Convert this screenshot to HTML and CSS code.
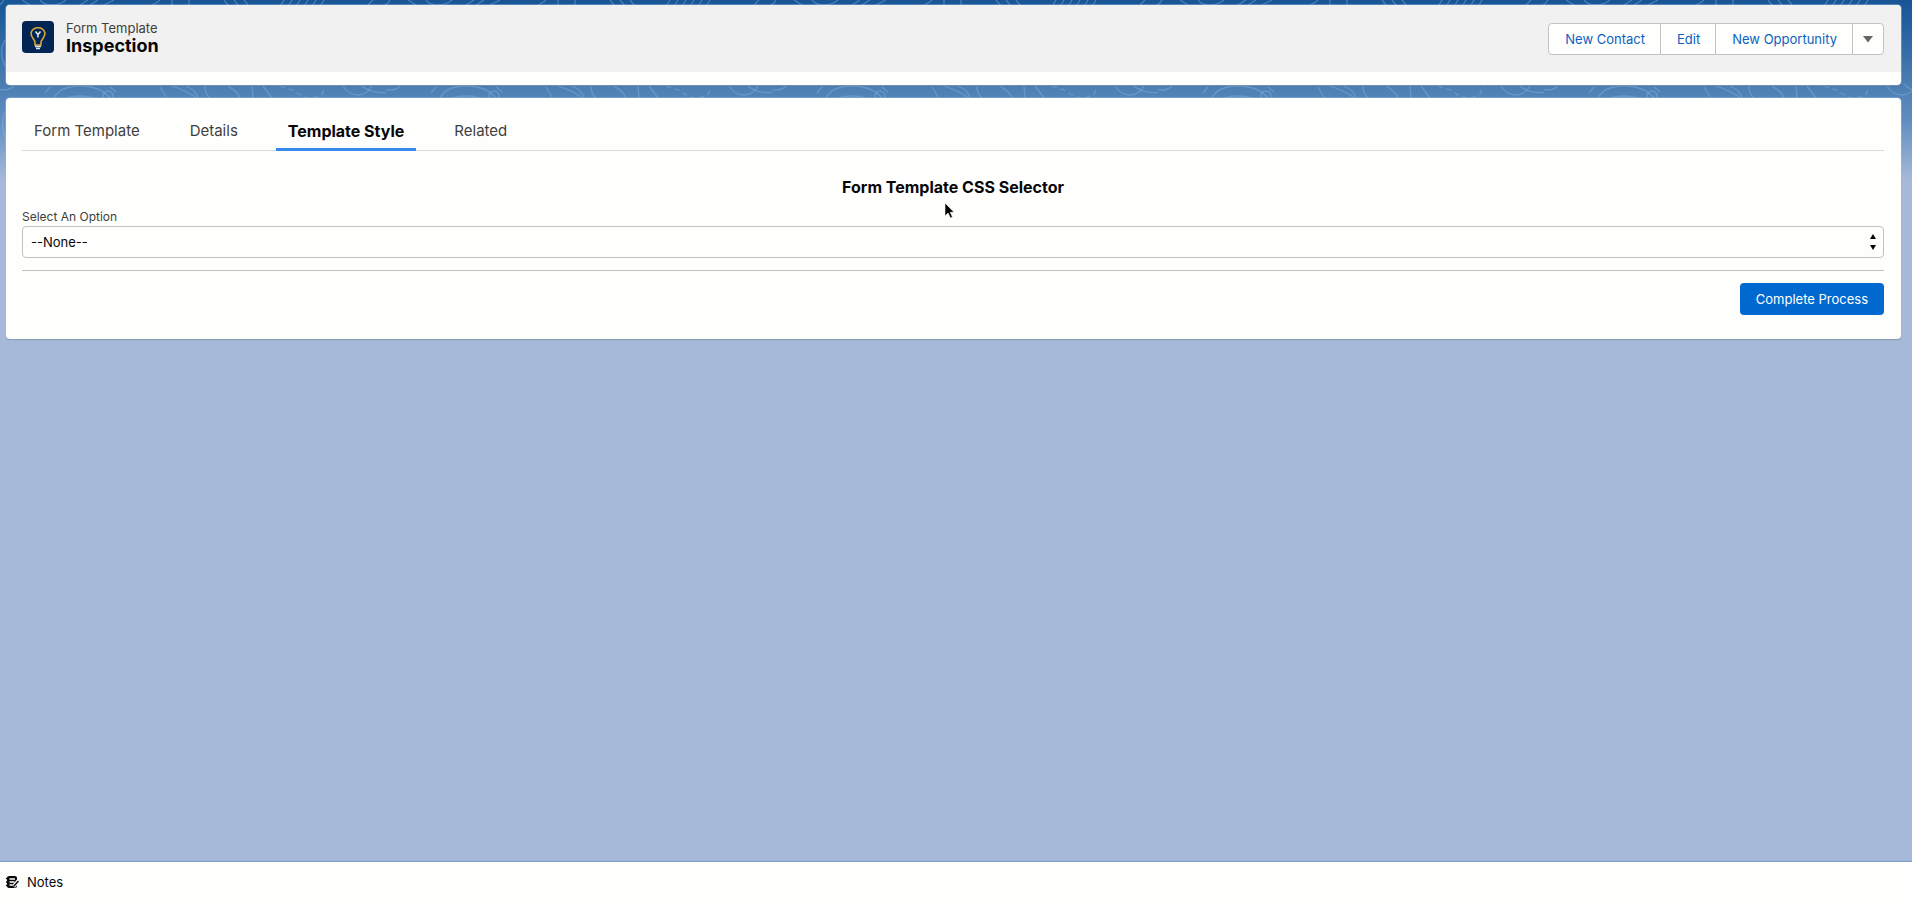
FILE: index.html
```html
<!DOCTYPE html>
<html lang="en">
<head>
<meta charset="utf-8">
<title>Inspection | Form Template</title>
<link rel="stylesheet" href="styles.css">
</head>
<body>
<svg class="backdrop" aria-hidden="true">
  <defs>
    <pattern id="contours" width="386" height="180" patternUnits="userSpaceOnUse">
      <g fill="none" stroke="#8db6e2" stroke-opacity=".4" stroke-width="1.3">
        <path d="M4 0q-3 6-12 8M390 0q-3 6-12 8M22 0l8 5M40 0q4 5 12 5t14-5M80 5l8-5M90 5l8-5M104 5l10-5M160 0q-3 3-8 5M172 0v5M189 0v5M224 0q6 8 14 13M234 0q6 8 14 13M244 0q6 8 14 13M284 0l-3 5M292 0l-3 5M300 0l-3 5M308 0l-3 5M316 0l-3 5M324 0l-3 5M368 5l5-5"/>
        <path d="M54 98Q60 86 80 86Q100 86 110 98M66 98q14-4 28 0"/>
        <circle cx="108" cy="96" r="5"/>
        <path d="M45 93l5-6M110 87l6 5M160 87l6 10M172 86q18 6 24 12M186 86q10 4 12 12M205 86q0 8 5 12M228 86q10 6 12 12M252 86l1 12M263 86l9 12M387 86v12"/>
        <path d="M280 86l12 4 10 6 10 3 10-5 4-8" stroke-dasharray="5 4"/>
        <path d="M343 86q6 9 15 9t14-9M14 86q-4 4-10 4t-10-4"/>
        <path d="M371 24q10-4 15-12M371 38q8-3 12 0M374 56q9-4 8 5t-10 8M360 84q10 11 30 8M371 116q6 20 10 30q0 6-10 14M371 164l12-6M371 172l12-5M5 40q-7 12 0 26M6 110q-7 14 0 30M0 165l6-1"/>
      </g>
    </pattern>
  </defs>
  <rect width="100%" height="180" fill="url(#contours)"/>
</svg>
<main class="page">
  <header class="card record">
    <div class="record-bar">
      <svg class="record-icon" viewBox="0 0 32 32" aria-hidden="true">
        <rect width="32" height="32" rx="4" fill="#032556"/>
        <path d="M13 24v-3c0-2-4-4-4-9a7.300 7.300 0 0 1 14 0c0 5-4 7-4 9v3z" fill="none" stroke="#d9a832" stroke-width="1.600"/>
        <path d="M13.500 10.500l2.500 3 2.500-3M16 13.500v3" fill="none" stroke="#e8edf5" stroke-width="1.500"/>
        <path d="M13 25.500h6M14 27.500h4" stroke="#dfe3ea" stroke-width="1.500"/>
      </svg>
      <div class="record-name">
        <p class="record-type">Form Template</p>
        <h1 class="record-title">Inspection</h1>
      </div>
      <div class="actions">
        <button class="action" type="button">New Contact</button>
        <button class="action" type="button">Edit</button>
        <button class="action" type="button">New Opportunity</button>
        <button class="action action-more" type="button" aria-label="More actions">
          <svg width="10" height="7" viewBox="0 0 10 7" aria-hidden="true"><path d="M0 0h10L5 6.500z" fill="#66645f"/></svg>
        </button>
      </div>
    </div>
  </header>
  <section class="card content">
    <nav class="tabs">
      <a class="tab" href="#">Form Template</a>
      <a class="tab" href="#">Details</a>
      <a class="tab tab-active" href="#" aria-current="page">Template Style</a>
      <a class="tab" href="#">Related</a>
    </nav>
    <h2 class="form-title">Form Template CSS Selector</h2>
    <form class="form">
      <label class="form-label" for="style-option">Select An Option</label>
      <div class="select-wrap">
        <select class="select" id="style-option"><option>--None--</option></select>
        <svg class="select-arrows" width="6" height="16" viewBox="0 0 6 16" aria-hidden="true"><path d="M0 5L3 0l3 5zM0 11h6l-3 5z" fill="#080707"/></svg>
      </div>
      <div class="form-footer">
        <button class="submit" type="button">Complete Process</button>
      </div>
    </form>
  </section>
</main>
<footer class="utility">
  <button class="utility-item" type="button">
    <svg width="13" height="12" viewBox="0 0 13 12" aria-hidden="true">
      <rect x="1" y="0" width="10" height="12" rx="2" fill="#0b0b0b"/>
      <path d="M0 2.500h2M0 6h2M0 9.500h2" stroke="#0b0b0b" stroke-width="1.300"/>
      <path d="M3.500 3h5.500M3.500 6h5M3.500 9h3" stroke="#fff" stroke-width="1.300"/>
      <path d="M7.500 10.500l5.500-6.500" stroke="#fff" stroke-width="3.600"/>
      <path d="M7.500 10.500l5-5.500" stroke="#0b0b0b" stroke-width="1.500"/>
    </svg>
    Notes
  </button>
</footer>
<svg class="pointer" width="12" height="18" viewBox="0 0 12 18" aria-hidden="true"><path d="M1 1v13l3-3 2.500 5 2-1-2.300-4.700H10z" fill="#000" stroke="#fff" stroke-width=".6"/></svg>
</body>
</html>
```
FILE: styles.css
```css
* { box-sizing: border-box; }

body {
  margin: 0;
  min-height: 100vh;
  display: flex;
  flex-direction: column;
  font-family: Inter, "Liberation Sans", sans-serif;
  font-size: 13px;
  color: #080707;
  background: #a7b9d9 linear-gradient(#195594 0, #1f5c9c 16px, #4f80b5 90px, #5f8dc0 120px, #a7b9d9 180px) no-repeat;
}

h1, h2, p { margin: 0; }
button, select { font: inherit; }

.backdrop {
  position: absolute;
  inset: 0 0 auto;
  width: 100%;
  height: 180px;
}

.page {
  position: relative;
  flex: 1;
  display: flex;
  flex-direction: column;
  gap: 13px;
  padding: 5px 11px 24px 6px;
}

.card {
  background: #fefefd;
  border-radius: 4px;
  box-shadow: 0 0 0 1px rgba(150, 190, 235, .45), 0 1px 1px rgba(90, 90, 90, .6);
}

.record { padding-bottom: 13px; }

.record-bar {
  display: flex;
  align-items: flex-start;
  gap: 12px;
  padding: 16px 17px 16px 16px;
  background: #f1f1f1;
  border-radius: 4px 4px 0 0;
}

.record-icon { width: 32px; height: 32px; }
.record-name { flex: 1; }
.record-type { line-height: 15px; color: #3e3e3c; }
.record-title { font-size: 18px; line-height: 20px; font-weight: 700; }

.actions {
  display: flex;
  margin-top: 2px;
  border: 1px solid #c2c2c4;
  border-radius: 4px;
  background: #fefefd;
}

.action {
  height: 30px;
  padding: 0 15px 0 16px;
  border: 0;
  background: none;
  color: #0b62c1;
}

.action + .action { border-left: 1px solid #c2c2c4; }
.action-more { display: flex; align-items: center; padding: 0 10px; }

.content { padding: 14px 17px 24px 16px; }

.tabs {
  display: flex;
  gap: 26px;
  border-bottom: 1px solid #dddbda;
}

.tab {
  padding: 0 12px;
  font-size: 15px;
  line-height: 38px;
  color: #3e3e3c;
  text-decoration: none;
}

.tab-active {
  font-size: 16px;
  font-weight: 700;
  color: #080707;
  box-shadow: inset 0 -2px #3b88ec, 0 1px #3b88ec;
}

.form-title {
  margin-top: 24px;
  font-size: 16px;
  line-height: 24px;
  font-weight: 700;
  text-align: center;
}

.form { display: flex; flex-direction: column; }

.form-label {
  margin-top: 9px;
  font-size: 12px;
  line-height: 18px;
  color: #3e3e3c;
}

.select-wrap { display: grid; align-items: center; }
.select-wrap > * { grid-area: 1 / 1; }

.select {
  appearance: none;
  width: 100%;
  height: 32px;
  padding: 0 24px 0 8px;
  border: 1px solid #c2c2c4;
  border-radius: 4px;
  background: #fefefd;
  color: #080707;
}

.select-arrows { justify-self: end; margin-right: 8px; pointer-events: none; }

.form-footer {
  display: flex;
  justify-content: flex-end;
  margin-top: 12px;
  padding-top: 12px;
  border-top: 1px solid #c2c2c4;
}

.submit {
  height: 32px;
  padding: 0 16px;
  border: 0;
  border-radius: 4px;
  background: #0069d0;
  color: #fff;
}

.utility {
  position: relative;
  display: flex;
  height: 40px;
  background: #fefefd;
  box-shadow: 0 -1px 1px #7f9cc6;
}

.utility-item {
  display: flex;
  align-items: center;
  gap: 8px;
  padding: 0 6px;
  border: 0;
  background: none;
  color: #080707;
}

.pointer { position: absolute; left: 944px; top: 202px; }
```
